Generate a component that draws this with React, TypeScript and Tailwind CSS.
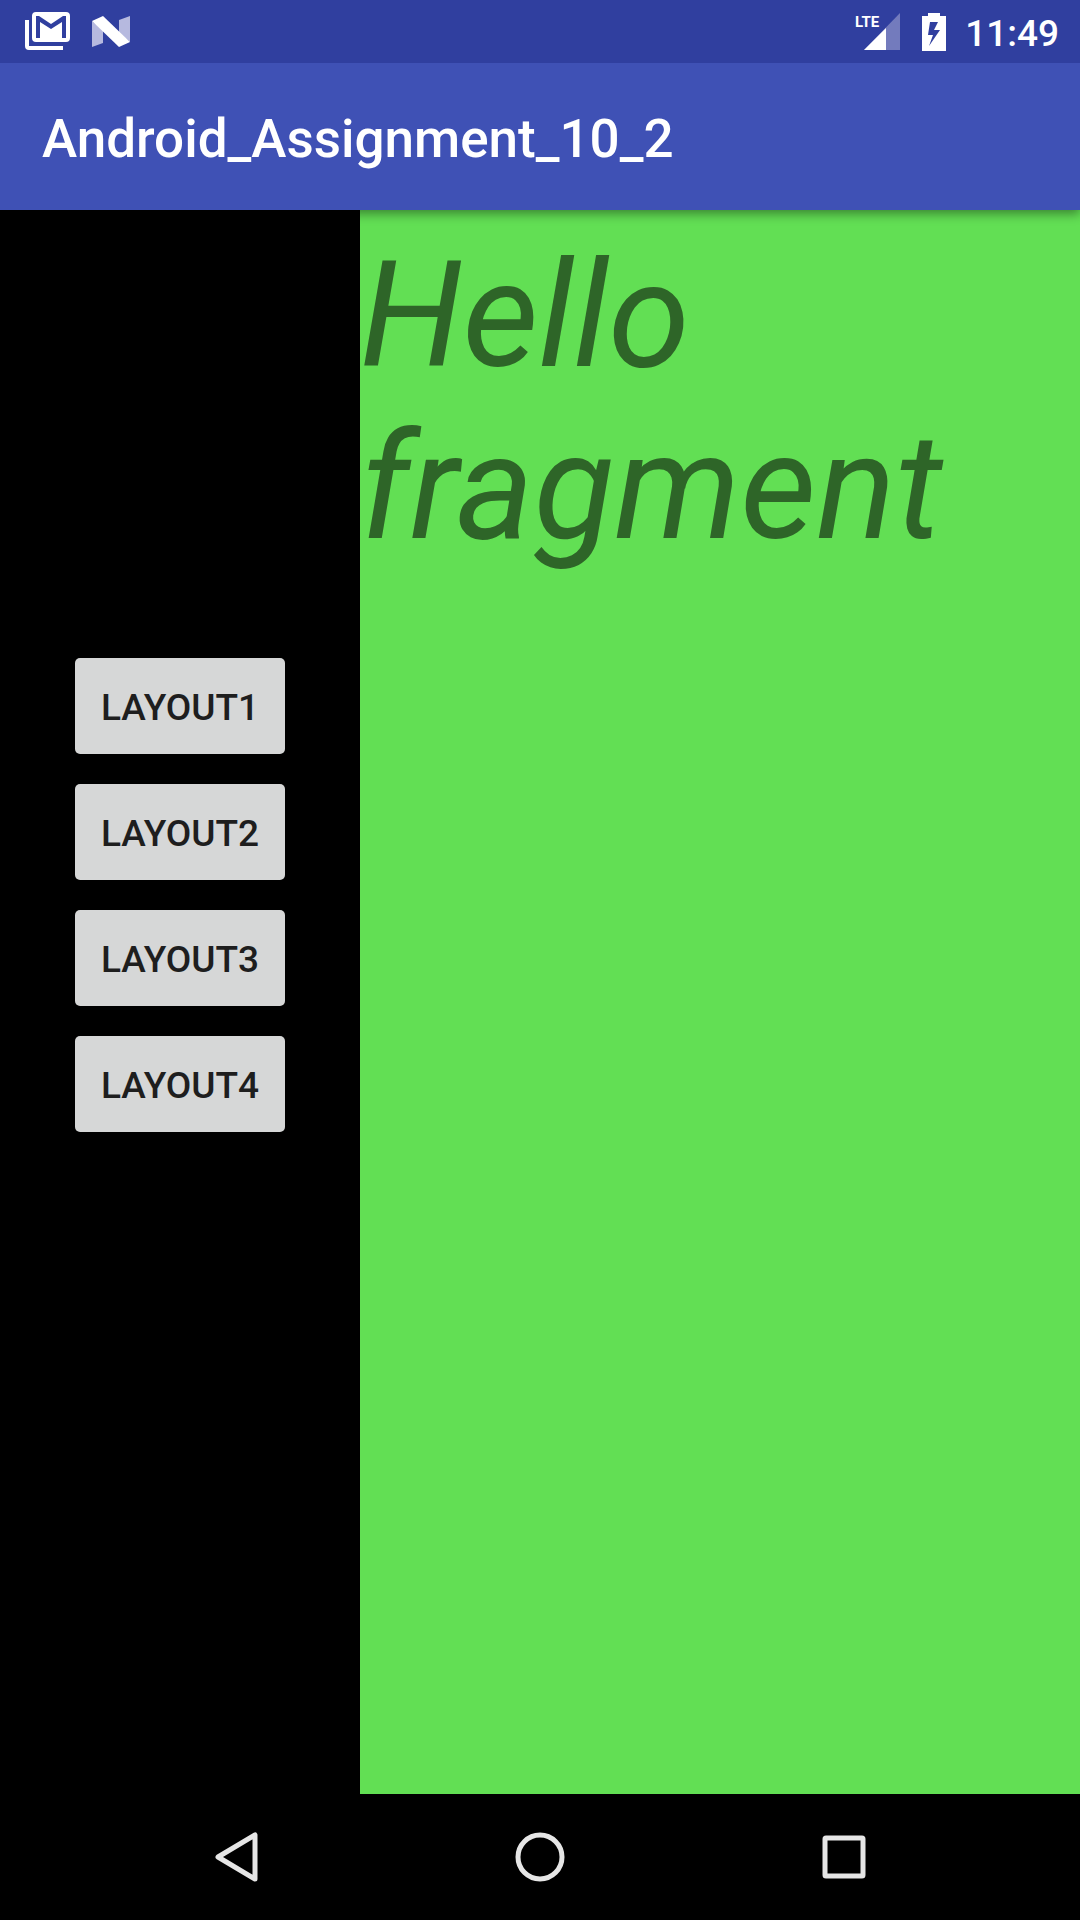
const layouts = ["Layout1", "Layout2", "Layout3", "Layout4"];

function MailIcon() {
  return (
    <svg width="46" height="39" viewBox="0 0 46 39" aria-label="Gmail" role="img">
      <path d="M0 8H4V34H38V38H4Q0 38 0 34Z" fill="#fff" />
      <path
        fillRule="evenodd"
        d="M11 0H41Q45 0 45 4V26Q45 30 41 30H11Q7 30 7 26V4Q7 0 11 0ZM11 4V26H15V10L26 17L37 10V26H41V4H38L26 12L14 4Z"
        fill="#fff"
      />
    </svg>
  );
}

function NougatIcon() {
  return (
    <svg width="38" height="32" viewBox="0 0 38 32" aria-label="Android N" role="img">
      <path d="M0 5L11 14V27L0 31Z" fill="#b6b9df" />
      <path d="M38 0V26L27 17V4Z" fill="#b6b9df" />
      <path d="M0 5L11 0L38 26L27 31Z" fill="#fff" />
    </svg>
  );
}

function SignalIcon() {
  return (
    <svg width="45" height="38" viewBox="0 0 45 38" aria-label="LTE signal" role="img">
      <path d="M45 0V37H9Z" fill="#737bbd" />
      <path d="M31 15V37H9Z" fill="#fff" />
      <text x="0" y="14" fill="#fff" className="text-[15px] font-bold">
        LTE
      </text>
    </svg>
  );
}

function BatteryIcon() {
  return (
    <svg width="24" height="38" viewBox="0 0 24 38" aria-label="Battery charging" role="img">
      <path
        fillRule="evenodd"
        d="M6 0H18V3H24V38H0V3H6ZM8 9L6 22H11L7 33L18 17H12L16 9Z"
        fill="#fff"
      />
    </svg>
  );
}

export default function App() {
  return (
    <div className="flex min-h-screen flex-col bg-black font-[Roboto,sans-serif]">
      <header className="relative z-10 bg-[#3f51b5] text-white shadow-[0_4px_10px_rgba(0,0,0,0.4)]">
        <div className="flex h-[63px] items-center justify-between bg-[#303f9f] pr-[21px] pl-[25px]">
          <div className="flex items-center gap-[21px]">
            <MailIcon />
            <NougatIcon />
          </div>
          <div className="flex items-center">
            <SignalIcon />
            <span className="ml-[22px] flex">
              <BatteryIcon />
            </span>
            <time className="ml-[19px] pt-1 text-[37px] leading-none font-medium">11:49</time>
          </div>
        </div>
        <div className="flex h-[147px] items-center px-[42px] pt-1.5">
          <h1 className="text-[53px] leading-none font-medium">Android_Assignment_10_2</h1>
        </div>
      </header>

      <div className="flex flex-1">
        <nav className="flex w-1/3 flex-col items-center gap-[30px] pt-[448px]" aria-label="Layouts">
          {layouts.map((name) => (
            <button
              key={name}
              type="button"
              className="h-24 rounded-[5px] bg-[#d6d7d7] px-[26px] pt-0.5 text-[37px] leading-none font-medium text-[#1e1e1e] uppercase"
            >
              {name}
            </button>
          ))}
        </nav>
        <main className="flex-1 bg-[#62df54] pt-5">
          <p className="text-[148px] leading-[172px] text-[#2e6528] italic">Hello fragment</p>
        </main>
      </div>

      <footer className="flex h-[126px] items-center justify-center gap-[230px]">
        <button type="button" aria-label="Back" className="flex w-[74px] justify-center">
          <svg width="44" height="50" viewBox="0 0 44 50">
            <path d="M41 3V47L4 25Z" fill="none" stroke="#e6e6e6" strokeWidth="5" strokeLinejoin="round" />
          </svg>
        </button>
        <button type="button" aria-label="Home" className="flex w-[74px] justify-center">
          <svg width="50" height="50" viewBox="0 0 50 50">
            <circle cx="25" cy="25" r="22" fill="none" stroke="#e6e6e6" strokeWidth="5" />
          </svg>
        </button>
        <button type="button" aria-label="Recent apps" className="flex w-[74px] justify-center">
          <svg width="44" height="44" viewBox="0 0 44 44">
            <rect x="3" y="3" width="38" height="38" rx="1" fill="none" stroke="#e6e6e6" strokeWidth="5" strokeLinejoin="round" />
          </svg>
        </button>
      </footer>
    </div>
  );
}
